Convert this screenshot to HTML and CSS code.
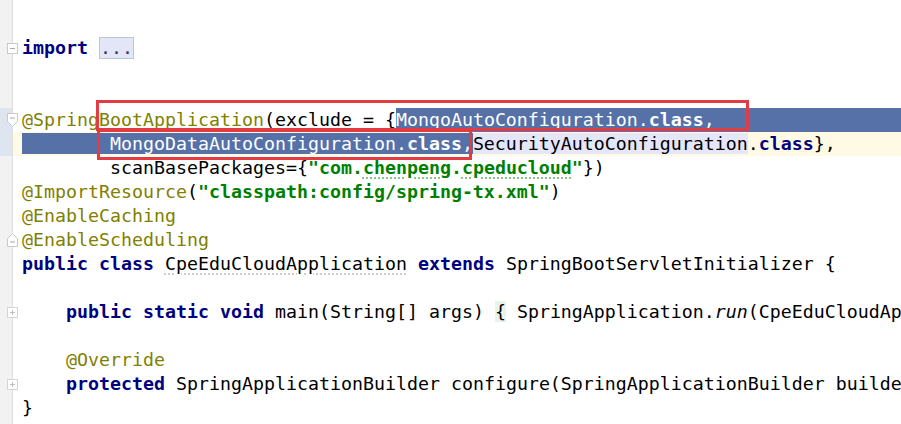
FILE: index.html
```html
<!DOCTYPE html>
<html lang="en">
  <head>
    <meta charset="UTF-8" />
    <meta name="viewport" content="width=device-width, initial-scale=1.0" />
    <title>CpeEduCloudApplication.java</title>
    <link rel="stylesheet" href="styles.css">
  </head>
  <body>
    <div class="editor">
      <div class="line"><span class="fold"></span><span class="code"></span></div>
      <div class="line">
        <span class="fold">
          <svg class="marker" width="11" height="11" viewBox="0 0 11 11"><rect x="0.5" y="0.5" width="10" height="10" fill="#fff" stroke="#c9c9c9"/><path d="M3 5.5h5" stroke="#aaa"/></svg>
        </span>
        <span class="code"><span class="kw">import</span> <span class="folded">...</span></span>
      </div>
      <div class="line"><span class="fold"></span><span class="code"></span></div>
      <div class="line"><span class="fold"></span><span class="code"></span></div>
      <div class="line sel-gutter">
        <span class="fold">
          <svg class="marker marker-tall" width="11" height="14" viewBox="0 0 11 14"><path d="M0.5 0.5h10v8l-5 5l-5-5z" fill="#fff" stroke="#c9c9c9"/><path d="M3 5h5" stroke="#aaa"/></svg>
        </span>
        <span class="code code-flex"><span class="ann">@SpringBootApplication</span>(exclude = {<span class="sel sel-eol">MongoAutoConfiguration.<b>class</b>,</span></span>
      </div>
      <div class="line sel-gutter caret">
        <span class="fold"></span>
        <span class="code"><span class="sel">        MongoDataAutoConfiguration.<b>class</b>,</span><span class="usage">SecurityAutoConfiguration</span>.<span class="kw">class</span>},</span>
      </div>
      <div class="line"><span class="fold"></span><span class="code">        scanBasePackages={<span class="str">"com.<span class="typo">chenpeng</span>.<span class="typo">cpeducloud</span>"</span>})</span></div>
      <div class="line"><span class="fold"></span><span class="code"><span class="ann">@ImportResource</span>(<span class="str">"classpath:config/spring-tx.xml"</span>)</span></div>
      <div class="line"><span class="fold"></span><span class="code"><span class="ann">@EnableCaching</span></span></div>
      <div class="line">
        <span class="fold">
          <svg class="marker marker-tall" width="11" height="14" viewBox="0 0 11 14"><path d="M0.5 13.5h10v-8l-5-5l-5 5z" fill="#fff" stroke="#c9c9c9"/><path d="M3 9h5" stroke="#aaa"/></svg>
        </span>
        <span class="code"><span class="ann">@EnableScheduling</span></span>
      </div>
      <div class="line"><span class="fold"></span><span class="code"><span class="kw">public class</span> <span class="typo-soft">CpeEduCloudApplication</span> <span class="kw">extends</span> SpringBootServletInitializer {</span></div>
      <div class="line"><span class="fold"></span><span class="code"></span></div>
      <div class="line">
        <span class="fold">
          <svg class="marker" width="11" height="11" viewBox="0 0 11 11"><rect x="0.5" y="0.5" width="10" height="10" fill="#fff" stroke="#d4d4d4"/><path d="M3 5.5h5M5.5 3v5" stroke="#bbb"/></svg>
        </span>
        <span class="code">    <span class="kw">public static void</span> main(String[] args) <span class="brace">{</span> SpringApplication.<i>run</i>(CpeEduCloudApplication.<span class="kw">class</span>, args); }</span>
      </div>
      <div class="line"><span class="fold"></span><span class="code"></span></div>
      <div class="line"><span class="fold"></span><span class="code">    <span class="ann">@Override</span></span></div>
      <div class="line">
        <span class="fold">
          <svg class="marker" width="11" height="11" viewBox="0 0 11 11"><rect x="0.5" y="0.5" width="10" height="10" fill="#fff" stroke="#d4d4d4"/><path d="M3 5.5h5M5.5 3v5" stroke="#bbb"/></svg>
        </span>
        <span class="code">    <span class="kw">protected</span> SpringApplicationBuilder configure(SpringApplicationBuilder builder) {</span>
      </div>
      <div class="line"><span class="fold"></span><span class="code">}</span></div>

      <!-- Cadres rouges d'annotation -->
      <div class="mark mark-top"></div>
      <div class="mark mark-bottom"></div>
    </div>
  </body>
</html>
```

FILE: styles.css
```css
/* Page */
body {
  margin: 0;
  background: #ffffff;
  overflow: hidden;
}

/* Zone d'édition avec gouttière */
.editor {
  position: relative;
  height: 424px;
  padding-top: 12px;
  box-sizing: border-box;
  background: linear-gradient(to right, #f2f2f2 12px, #dedede 12px, #dedede 13px, #ffffff 13px);
  font-family: "DejaVu Sans Mono", "Liberation Mono", monospace;
  font-size: 18.27px;
  color: #000000;
}

.line {
  display: flex;
  height: 24px;
  line-height: 24px;
}

/* Gouttière */
.fold {
  position: relative;
  flex: none;
  width: 13px;
}

.sel-gutter .fold {
  background: linear-gradient(to right, #dfe5ee 12px, transparent 12px);
}

.marker {
  position: absolute;
  left: 7px;
  top: 7px;
}

.marker-tall {
  top: 5px;
}

/* Code */
.code {
  flex: 1;
  padding-left: 9px;
  white-space: pre;
}

.code-flex {
  display: flex;
}

.caret .code {
  background: #fffae3;
}

/* Coloration syntaxique */
.kw {
  color: #000080;
  font-weight: bold;
}

.ann {
  color: #808000;
}

.str {
  color: #008000;
  font-weight: bold;
}

.folded {
  display: inline-block;
  height: 22px;
  line-height: 20px;
  vertical-align: top;
  margin-top: 1px;
  box-sizing: border-box;
  border: 1px solid #b9c8c8;
  background: #e3e6f6;
  color: #333366;
}

.sel {
  background: #5571a8;
  color: #ffffff;
}

.sel b {
  font-weight: bold;
}

.sel-eol {
  flex: 1;
}

.usage {
  background: #e6e6fa;
}

.brace {
  background: #e9f3e9;
}

.typo {
  text-decoration: underline dotted #7fc07f;
  text-underline-offset: 4px;
}

.typo-soft {
  text-decoration: underline dotted #c8c8c8;
  text-underline-offset: 4px;
}

/* Cadres rouges */
.mark {
  position: absolute;
  box-sizing: border-box;
  border: 3px solid #e23b41;
}

.mark-top {
  left: 96px;
  top: 100px;
  width: 653px;
  height: 31px;
}

.mark-bottom {
  left: 97px;
  top: 129px;
  width: 375px;
  height: 31px;
}
```
